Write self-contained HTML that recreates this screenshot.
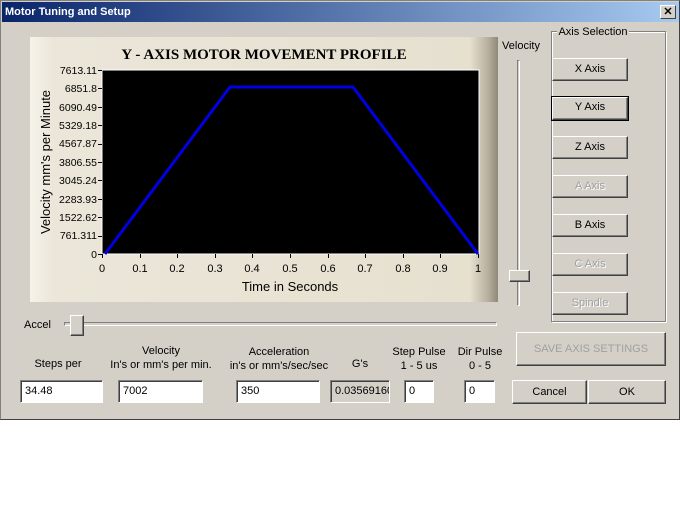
<!DOCTYPE html>
<html><head><meta charset="utf-8"><style>
*{margin:0;padding:0;box-sizing:border-box}
body{width:680px;height:512px;background:#fff;position:relative;overflow:hidden;font-family:"Liberation Sans",sans-serif;font-size:11px;color:#000}
.win{position:absolute;left:0;top:0;width:680px;height:420px;background:#d4d0c8;border:1px solid #808080;border-right-color:#404040;border-bottom-color:#404040}
.title{position:absolute;left:1px;top:1px;width:677px;height:20px;background:linear-gradient(90deg,#0a246a,#a6caf0);color:#fff;font-weight:bold;font-size:11px;line-height:20px;padding-left:3px}
.close{position:absolute;right:3px;top:3px;width:16px;height:14px;background:#d4d0c8;border:1px solid;border-color:#fff #404040 #404040 #fff;color:#000;font-size:11px;line-height:12px;text-align:center;font-weight:bold}
.abs{position:absolute}
.btn{position:absolute;background:#d4d0c8;border:1px solid;border-color:#fff #404040 #404040 #fff;box-shadow:inset -1px -1px 0 #808080;text-align:center;font-size:11px}
.dis{color:#a0a0a0;text-shadow:1px 1px 0 #fff}
.inp{position:absolute;height:23px;background:#fff;border:1px solid;border-color:#808080 #fff #fff #808080;box-shadow:inset 1px 1px 0 #404040;padding:4px 0 0 4px;font-size:11px}
.lbl{position:absolute;text-align:center;font-size:11px;line-height:14px}
</style></head><body>
<div class="win">
<div class="title">Motor Tuning and Setup<div class="close">✕</div></div>
</div>
<svg class="abs" style="left:30px;top:37px" width="468" height="265">
<defs><linearGradient id="g" x1="0" x2="1"><stop offset="0" stop-color="#f6f3ea"/><stop offset="0.05" stop-color="#ebe6d9"/><stop offset="0.94" stop-color="#e6e0cf"/><stop offset="0.98" stop-color="#b5ae9c"/><stop offset="1" stop-color="#8e8878"/></linearGradient></defs>
<rect width="468" height="265" fill="url(#g)"/>
<text x="234" y="22" text-anchor="middle" font-family="Liberation Serif,serif" font-weight="bold" font-size="15">Y - AXIS MOTOR MOVEMENT PROFILE</text>
<rect x="72" y="33" width="377" height="184" fill="#000" stroke="#fff" stroke-width="1"/>
<polyline points="75,217 200,50 323,50 448,217" fill="none" stroke="#0000e0" stroke-width="3"/>
<g font-size="10.5" text-anchor="end" fill="#000">
<text x="67" y="37">7613.11</text><text x="67" y="55">6851.8</text><text x="67" y="74">6090.49</text><text x="67" y="92">5329.18</text><text x="67" y="110">4567.87</text><text x="67" y="129">3806.55</text><text x="67" y="147">3045.24</text><text x="67" y="166">2283.93</text><text x="67" y="184">1522.62</text><text x="67" y="202">761.311</text><text x="67" y="221">0</text>
</g>
<g stroke="#000"><path d="M68 33.5h4M68 51.5h4M68 70.5h4M68 88.5h4M68 107.5h4M68 125.5h4M68 143.5h4M68 162.5h4M68 180.5h4M68 199.5h4M68 217.5h4"/>
<path d="M72.5 217v4M110.5 217v4M147.5 217v4M185.5 217v4M222.5 217v4M260.5 217v4M298.5 217v4M335.5 217v4M373.5 217v4M410.5 217v4M448.5 217v4"/></g>
<g font-size="11" text-anchor="middle">
<text x="72" y="235">0</text><text x="110" y="235">0.1</text><text x="147" y="235">0.2</text><text x="185" y="235">0.3</text><text x="222" y="235">0.4</text><text x="260" y="235">0.5</text><text x="298" y="235">0.6</text><text x="335" y="235">0.7</text><text x="373" y="235">0.8</text><text x="410" y="235">0.9</text><text x="448" y="235">1</text>
<text x="260" y="254" font-size="13">Time in Seconds</text>
<text transform="translate(20,125) rotate(-90)" font-size="13">Velocity mm's per Minute</text>
</g>
</svg>
<div class="lbl" style="left:500px;top:39px;width:42px">Velocity</div>
<div class="abs" style="left:517px;top:60px;width:3px;height:246px;border:1px solid;border-color:#808080 #fff #fff #808080"></div>
<div class="btn" style="left:509px;top:270px;width:21px;height:12px"></div>
<div class="abs" style="left:551px;top:31px;width:115px;height:291px;border:1px solid #808080;box-shadow:1px 1px 0 #fff,inset 1px 1px 0 #fff"></div>
<div class="lbl" style="left:557px;top:25px;width:72px;background:#d4d0c8">Axis Selection</div>
<div class="btn" style="left:552px;top:58px;width:76px;height:23px;line-height:20px">X Axis</div>
<div class="btn" style="left:552px;top:97px;width:76px;height:23px;line-height:19px;outline:1px solid #000">Y Axis</div>
<div class="btn" style="left:552px;top:136px;width:76px;height:23px;line-height:20px">Z Axis</div>
<div class="btn dis" style="left:552px;top:175px;width:76px;height:23px;line-height:20px">A Axis</div>
<div class="btn" style="left:552px;top:214px;width:76px;height:23px;line-height:20px">B Axis</div>
<div class="btn dis" style="left:552px;top:253px;width:76px;height:23px;line-height:20px">C Axis</div>
<div class="btn dis" style="left:552px;top:292px;width:76px;height:23px;line-height:20px">Spindle</div>
<div class="lbl" style="left:24px;top:318px">Accel</div>
<div class="abs" style="left:64px;top:322px;width:433px;height:4px;border:1px solid;border-color:#808080 #fff #fff #808080"></div>
<div class="btn" style="left:70px;top:315px;width:14px;height:21px"></div>
<div class="btn dis" style="left:516px;top:332px;width:150px;height:34px;line-height:32px;text-shadow:none">SAVE AXIS SETTINGS</div>
<div class="lbl" style="left:20px;top:357px;width:76px">Steps per</div>
<div class="lbl" style="left:110px;top:344px;width:102px">Velocity<br>In's or mm's per min.</div>
<div class="lbl" style="left:224px;top:345px;width:110px">Acceleration<br>in's or mm's/sec/sec</div>
<div class="lbl" style="left:345px;top:357px;width:30px">G's</div>
<div class="lbl" style="left:386px;top:345px;width:66px">Step Pulse<br>1 - 5 us</div>
<div class="lbl" style="left:450px;top:345px;width:60px">Dir Pulse<br>0 - 5</div>
<div class="inp" style="left:20px;top:380px;width:83px">34.48</div>
<div class="inp" style="left:118px;top:380px;width:85px">7002</div>
<div class="inp" style="left:236px;top:380px;width:84px">350</div>
<div class="inp" style="left:330px;top:380px;width:60px;background:#d4d0c8;overflow:hidden;white-space:nowrap;padding-right:3px">0.03569160</div>
<div class="inp" style="left:404px;top:380px;width:30px">0</div>
<div class="inp" style="left:464px;top:380px;width:31px">0</div>
<div class="btn" style="left:512px;top:380px;width:75px;height:24px;line-height:22px">Cancel</div>
<div class="btn" style="left:588px;top:380px;width:78px;height:24px;line-height:22px">OK</div>
</body></html>
